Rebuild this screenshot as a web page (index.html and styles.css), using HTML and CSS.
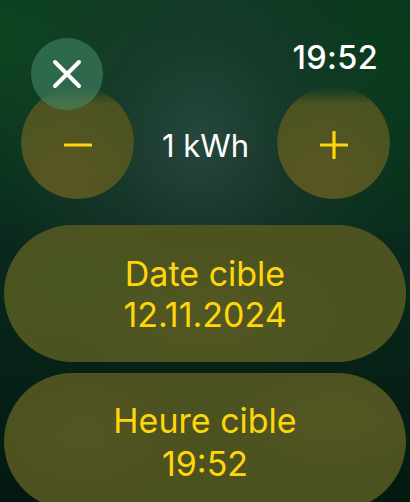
FILE: index.html
```html
<!DOCTYPE html>
<html lang="fr">
<head>
<meta charset="utf-8">
<link rel="stylesheet" href="styles.css">
</head>
<body>
<div class="screen">
  <div class="header">
    <button class="close" aria-label="Fermer">
      <svg width="30" height="30" viewBox="0 0 30 30"><path d="M3 3 L27 27 M27 3 L3 27" stroke="#fff" stroke-width="4" stroke-linecap="round" fill="none"/></svg>
    </button>
    <div class="clock">19:52</div>
  </div>
  <div class="stepper">
    <button class="step" aria-label="Moins">
      <svg width="28" height="28" viewBox="0 0 28 28"><path d="M1 14 H27" stroke="#ffd60a" stroke-width="3.2" stroke-linecap="round"/></svg>
    </button>
    <div class="value">1 kWh</div>
    <button class="step" aria-label="Plus">
      <svg width="28" height="28" viewBox="0 0 28 28"><path d="M1 14 H27 M14 1 V27" stroke="#ffd60a" stroke-width="3.2" stroke-linecap="round"/></svg>
    </button>
  </div>
  <div class="pills">
    <button class="pill"><span>Date cible</span><span>12.11.2024</span></button>
    <button class="pill pill-b"><span>Heure cible</span><span>19:52</span></button>
  </div>
</div>
</body>
</html>
```
FILE: styles.css
```css
html, body {
  margin: 0;
  padding: 0;
  background: #02170c;
}
.screen {
  width: 410px;
  height: 502px;
  overflow: hidden;
  font-family: "Inter", "Roboto", sans-serif;
  background:
    radial-gradient(ellipse 200px 230px at 200px 140px, rgba(40,72,62,0.95) 0%, rgba(30,60,48,0.6) 45%, rgba(20,50,35,0) 100%),
    radial-gradient(ellipse 300px 200px at 0px 40px, rgba(14,70,32,0.9) 0%, rgba(14,70,32,0) 100%),
    radial-gradient(ellipse 260px 200px at 410px 60px, rgba(10,62,28,0.9) 0%, rgba(10,62,28,0) 100%),
    linear-gradient(180deg, #0a3320 0%, #0a2a1d 45%, #03190f 100%);
}
button {
  font: inherit;
  border: 0;
  padding: 0;
  margin: 0;
  color: inherit;
  cursor: pointer;
}
.header {
  display: flex;
  justify-content: space-between;
  align-items: flex-start;
  padding: 38px 32px 0 31px;
  height: 72px;
  position: relative;
  z-index: 2;
}
.close {
  width: 72px;
  height: 72px;
  border-radius: 50%;
  background: rgba(70, 140, 110, 0.55);
  display: flex;
  align-items: center;
  justify-content: center;
}
.clock {
  color: #fff;
  font-size: 32.5px;
  font-weight: 500;
  line-height: 1;
  margin-top: 4px;
  letter-spacing: 0.3px;
}
.stepper {
  display: flex;
  align-items: center;
  justify-content: space-between;
  padding: 0 20px 0 21px;
  margin-top: -24px;
  height: 113px;
  position: relative;
  z-index: 1;
}
.step {
  width: 113px;
  height: 113px;
  border-radius: 50%;
  background: radial-gradient(circle at 40% 80%, #5a5722 0%, #4d5421 60%, #485120 100%);
  display: flex;
  align-items: center;
  justify-content: center;
  -webkit-mask-image: linear-gradient(180deg, transparent 0px, rgba(0,0,0,0.4) 8px, #000 18px);
  mask-image: linear-gradient(180deg, transparent 0px, rgba(0,0,0,0.4) 8px, #000 18px);
}
.step svg { margin-top: 4px; }
.value {
  color: #fff;
  font-size: 31px;
  font-weight: 400;
  line-height: 1;
  margin-top: 6px;
}
.pills {
  display: flex;
  flex-direction: column;
  gap: 11px;
  padding: 26px 4px 0 4px;
}
.pill {
  height: 137px;
  border-radius: 69px;
  background:
    radial-gradient(ellipse 120px 60px at 70px 55px, rgba(70,90,40,0.5) 0%, rgba(70,90,40,0) 100%),
    radial-gradient(ellipse 140px 70px at 200px 90px, rgba(96,94,40,0.3) 0%, rgba(96,94,40,0) 100%),
    #4c5320;
  color: #ffd60a;
  display: flex;
  flex-direction: column;
  align-items: center;
  justify-content: center;
  font-size: 34px;
  line-height: 41px;
  font-weight: 400;
}
.pill-b {
  background:
    radial-gradient(ellipse 110px 70px at 80px 60px, rgba(96,88,42,0.45) 0%, rgba(96,88,42,0) 100%),
    radial-gradient(ellipse 120px 60px at 330px 45px, rgba(96,98,44,0.35) 0%, rgba(96,98,44,0) 100%),
    #4b511f;
  line-height: 43px;
}
```
